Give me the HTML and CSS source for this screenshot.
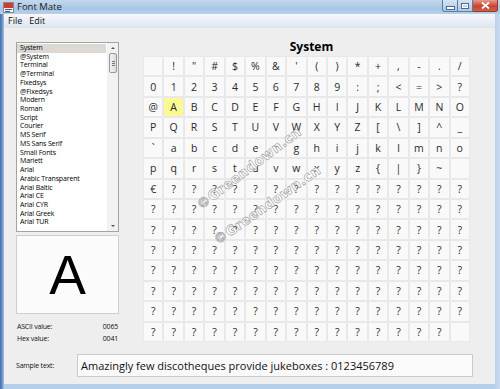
FILE: index.html
```html
<!DOCTYPE html>
<html>
<head>
<meta charset="utf-8">
<link rel="stylesheet" href="styles.css">
</head>
<body>
<div class="window">
  <div class="titlebar">
    <svg class="appicon" width="11" height="11" viewBox="0 0 11 11">
      <rect x="0.5" y="0.5" width="10" height="10" fill="#f4f4f4" stroke="#8a8a8a"/>
      <rect x="1" y="1" width="9" height="5" fill="#d23a2a"/>
      <rect x="2" y="7" width="7" height="1" fill="#3a5a9a"/>
      <rect x="2" y="9" width="5" height="1" fill="#3a5a9a"/>
    </svg>
    <span class="wtitle">Font Mate</span>
    <div class="wbtns">
      <div class="wb wmin"><span class="minbar"></span></div>
      <div class="wb wmax"><span class="maxbox"></span></div>
      <div class="wb wclose">
        <svg width="9" height="7" viewBox="0 0 9 7"><path d="M1 0.5 L8 6.5 M8 0.5 L1 6.5" stroke="#fff" stroke-width="1.8"/></svg>
      </div>
    </div>
  </div>
  <div class="menubar"><span class="mi">File</span><span class="mi">Edit</span></div>
  <div class="client">
    <div class="main">
      <div class="left">
        <div class="list">
          <div class="items">
            <div class="item sel">System</div>
            <div class="item">@System</div>
            <div class="item">Terminal</div>
            <div class="item">@Terminal</div>
            <div class="item">Fixedsys</div>
            <div class="item">@Fixedsys</div>
            <div class="item">Modern</div>
            <div class="item">Roman</div>
            <div class="item">Script</div>
            <div class="item">Courier</div>
            <div class="item">MS Serif</div>
            <div class="item">MS Sans Serif</div>
            <div class="item">Small Fonts</div>
            <div class="item">Marlett</div>
            <div class="item">Arial</div>
            <div class="item">Arabic Transparent</div>
            <div class="item">Arial Baltic</div>
            <div class="item">Arial CE</div>
            <div class="item">Arial CYR</div>
            <div class="item">Arial Greek</div>
            <div class="item">Arial TUR</div>
          </div>
          <div class="sbar">
            <div class="sarrow up"></div>
            <div class="sthumb"><span></span><span></span><span></span></div>
            <div class="strack"></div>
            <div class="sarrow down"></div>
          </div>
        </div>
        <div class="preview">A</div>
        <div class="values">
          <div class="vrow"><span>ASCII value:</span><span>0065</span></div>
          <div class="vrow"><span>Hex value:</span><span>0041</span></div>
        </div>
      </div>
      <div class="right">
        <div class="ftitle">System</div>
        <div class="grid">
          <div class="c"></div><div class="c">!</div><div class="c">&quot;</div><div class="c">#</div><div class="c">$</div><div class="c">%</div><div class="c">&amp;</div><div class="c">'</div><div class="c">(</div><div class="c">)</div><div class="c">*</div><div class="c">+</div><div class="c">,</div><div class="c">-</div><div class="c">.</div><div class="c">/</div>
          <div class="c">0</div><div class="c">1</div><div class="c">2</div><div class="c">3</div><div class="c">4</div><div class="c">5</div><div class="c">6</div><div class="c">7</div><div class="c">8</div><div class="c">9</div><div class="c">:</div><div class="c">;</div><div class="c">&lt;</div><div class="c">=</div><div class="c">&gt;</div><div class="c">?</div>
          <div class="c">@</div><div class="c sel">A</div><div class="c">B</div><div class="c">C</div><div class="c">D</div><div class="c">E</div><div class="c">F</div><div class="c">G</div><div class="c">H</div><div class="c">I</div><div class="c">J</div><div class="c">K</div><div class="c">L</div><div class="c">M</div><div class="c">N</div><div class="c">O</div>
          <div class="c">P</div><div class="c">Q</div><div class="c">R</div><div class="c">S</div><div class="c">T</div><div class="c">U</div><div class="c">V</div><div class="c">W</div><div class="c">X</div><div class="c">Y</div><div class="c">Z</div><div class="c">[</div><div class="c">\</div><div class="c">]</div><div class="c">^</div><div class="c">_</div>
          <div class="c">`</div><div class="c">a</div><div class="c">b</div><div class="c">c</div><div class="c">d</div><div class="c">e</div><div class="c">f</div><div class="c">g</div><div class="c">h</div><div class="c">i</div><div class="c">j</div><div class="c">k</div><div class="c">l</div><div class="c">m</div><div class="c">n</div><div class="c">o</div>
          <div class="c">p</div><div class="c">q</div><div class="c">r</div><div class="c">s</div><div class="c">t</div><div class="c">u</div><div class="c">v</div><div class="c">w</div><div class="c">x</div><div class="c">y</div><div class="c">z</div><div class="c">{</div><div class="c">|</div><div class="c">}</div><div class="c">~</div><div class="c"></div>
          <div class="c">€</div><div class="c">?</div><div class="c">?</div><div class="c">?</div><div class="c">?</div><div class="c">?</div><div class="c">?</div><div class="c">?</div><div class="c">?</div><div class="c">?</div><div class="c">?</div><div class="c">?</div><div class="c">?</div><div class="c">?</div><div class="c">?</div><div class="c">?</div>
          <div class="c">?</div><div class="c">?</div><div class="c">?</div><div class="c">?</div><div class="c">?</div><div class="c">?</div><div class="c">?</div><div class="c">?</div><div class="c">?</div><div class="c">?</div><div class="c">?</div><div class="c">?</div><div class="c">?</div><div class="c">?</div><div class="c">?</div><div class="c">?</div>
          <div class="c">?</div><div class="c">?</div><div class="c">?</div><div class="c">?</div><div class="c">?</div><div class="c">?</div><div class="c">?</div><div class="c">?</div><div class="c">?</div><div class="c">?</div><div class="c">?</div><div class="c">?</div><div class="c">?</div><div class="c">?</div><div class="c">?</div><div class="c">?</div>
          <div class="c">?</div><div class="c">?</div><div class="c">?</div><div class="c">?</div><div class="c">?</div><div class="c">?</div><div class="c">?</div><div class="c">?</div><div class="c">?</div><div class="c">?</div><div class="c">?</div><div class="c">?</div><div class="c">?</div><div class="c">?</div><div class="c">?</div><div class="c">?</div>
          <div class="c">?</div><div class="c">?</div><div class="c">?</div><div class="c">?</div><div class="c">?</div><div class="c">?</div><div class="c">?</div><div class="c">?</div><div class="c">?</div><div class="c">?</div><div class="c">?</div><div class="c">?</div><div class="c">?</div><div class="c">?</div><div class="c">?</div><div class="c">?</div>
          <div class="c">?</div><div class="c">?</div><div class="c">?</div><div class="c">?</div><div class="c">?</div><div class="c">?</div><div class="c">?</div><div class="c">?</div><div class="c">?</div><div class="c">?</div><div class="c">?</div><div class="c">?</div><div class="c">?</div><div class="c">?</div><div class="c">?</div><div class="c">?</div>
          <div class="c">?</div><div class="c">?</div><div class="c">?</div><div class="c">?</div><div class="c">?</div><div class="c">?</div><div class="c">?</div><div class="c">?</div><div class="c">?</div><div class="c">?</div><div class="c">?</div><div class="c">?</div><div class="c">?</div><div class="c">?</div><div class="c">?</div><div class="c">?</div>
          <div class="c">?</div><div class="c">?</div><div class="c">?</div><div class="c">?</div><div class="c">?</div><div class="c">?</div><div class="c">?</div><div class="c">?</div><div class="c">?</div><div class="c">?</div><div class="c">?</div><div class="c">?</div><div class="c">?</div><div class="c">?</div><div class="c">?</div><div class="c"></div>
        </div>
      </div>
    </div>
    <div class="sample">
      <span class="slabel">Sample text:</span>
      <div class="sbox">Amazingly few discotheques provide jukeboxes : 0123456789</div>
    </div>
    <div class="wm wm1">©Greendown.cn</div>
    <div class="wm wm2">©Greendown.cn</div>
  </div>
</div>
</body>
</html>
```
FILE: styles.css
```css
html, body { margin: 0; padding: 0; }
body { width: 500px; height: 389px; overflow: hidden; background: #fff; font-family: "Open Sans", "Noto Sans", sans-serif; }

.window {
  width: 500px; height: 389px; box-sizing: border-box;
  display: flex; flex-direction: column;
  background: linear-gradient(to right, #3f6fa8 0, #7aa3d0 3px, #b5cfeb 4px, #b5cfeb 494px, #c9dbef 500px);
}

.titlebar {
  height: 14px; position: relative; display: flex; align-items: center;
  background: linear-gradient(to bottom, #c4d8ee 0, #a9c6e6 60%, #b7d0ea 100%);
  padding-left: 3px;
}
.appicon { display: block; }
.wtitle { font-size: 9.5px; color: #1a1a1a; margin-left: 3px; line-height: 14px; }
.wbtns { position: absolute; right: 2px; top: 0; display: flex; height: 13px; }
.wb { height: 12px; border: 1px solid #5c7ea6; border-top: 0; display: flex; align-items: center; justify-content: center; box-sizing: border-box; }
.wmin { width: 16px; border-radius: 0 0 0 3px; background: linear-gradient(#d6e4f3, #aec7e3); }
.wmax { width: 15px; border-left: 0; background: linear-gradient(#d6e4f3, #aec7e3); }
.wclose { width: 25px; border-left: 0; border-color: #8e3a30; border-radius: 0 0 3px 0; background: linear-gradient(#e69a8c, #c8442f 55%, #d0624c); }
.minbar { width: 7px; height: 2px; background: #fff; border: 1px solid #4a6a90; margin-top: 4px; }
.maxbox { width: 6px; height: 4px; border: 1px solid #4a6a90; background: transparent; box-shadow: inset 0 0 0 1px #fff; }

.menubar {
  height: 14px; margin: 0 5px 0 4px; display: flex; align-items: center;
  background: linear-gradient(to bottom, #f6f8fb 0, #eaeff6 50%, #dce4ee 100%);
  padding-left: 4px;
}
.mi { font-size: 9px; color: #111; margin-right: 7px; line-height: 14px; }

.client {
  flex: 1; margin: 0 5px 5px 4px; position: relative;
  background: #eeeeee;
  padding: 12px 0 0 12px;
  display: flex; flex-direction: column;
}
.main { display: flex; gap: 25px; }
.left { width: 103px; padding-top: 2px; }
.list {
  height: 190px; box-sizing: border-box; border: 1px solid #a3a3a3;
  background: #fff; display: flex;
}
.items { flex: 1; padding-top: 1px; }
.item { font-size: 7px; line-height: 8.72px; height: 8.72px; padding-left: 3px; color: #000; white-space: nowrap; letter-spacing: -0.15px; }
.item.sel { background: #dcd8d3; margin-right: 1px; }
.sbar { width: 10px; border-left: 1px solid #f0f0f0; background: #f2f2f2; display: flex; flex-direction: column; align-items: center; }
.sarrow { width: 0; height: 0; border-left: 2px solid transparent; border-right: 2px solid transparent; margin: 4px 0; }
.sarrow.up { border-bottom: 2px solid #555; }
.sarrow.down { border-top: 2px solid #555; }
.sthumb {
  width: 8px; height: 20px; box-sizing: border-box; border: 1px solid #9a9a9a; border-radius: 2px;
  background: linear-gradient(to right, #f2f2f2, #dcdcdc);
  display: flex; flex-direction: column; align-items: center; justify-content: center; gap: 1px;
}
.sthumb span { width: 3px; height: 1px; background: #777; }
.strack { flex: 1; }

.preview {
  margin-top: 3px; height: 79px; box-sizing: border-box; border: 1px solid #cfcfcf;
  background: #fbfbfb; display: flex; align-items: center; justify-content: center;
  font-family: "Liberation Sans", Arial, sans-serif; font-size: 55px; color: #000; line-height: 1;
  padding-top: 2px;
}
.values { margin-top: 7px; }
.vrow { display: flex; justify-content: space-between; font-size: 7px; line-height: 12px; height: 12px; color: #111; padding: 0 1px 0 1px; letter-spacing: -0.2px; }

.right { width: 325px; }
.ftitle { height: 17px; font-size: 12px; font-weight: bold; text-align: center; line-height: 13px; padding-left: 10px; color: #000; font-family: "Open Sans", sans-serif; }
.grid {
  display: grid; grid-template-columns: repeat(16, 1fr); grid-template-rows: repeat(14, 1fr);
  gap: 2px; height: 284px;
}
.c {
  background: #f9f9f9; box-shadow: 0 0 0 0.5px #e2e2e2;
  display: flex; align-items: center; justify-content: center;
  font-size: 10.5px; color: #2a2a2a; font-family: "Open Sans", sans-serif;
}
.c.sel { background: #fbf895; }

.sample { display: flex; align-items: center; margin-top: 9px; }
.slabel { width: 61px; font-size: 7px; color: #111; letter-spacing: -0.2px; }
.sbox {
  width: 396px; height: 23px; box-sizing: border-box; border: 1px solid #cacaca; background: #fafafa;
  font-size: 11px; line-height: 21px; padding-left: 3px; color: #111; white-space: nowrap; overflow: hidden;
}

.wm {
  position: absolute; font-family: "DejaVu Sans", sans-serif; font-weight: bold; font-size: 13.5px;
  color: #ffffff; -webkit-text-stroke: 0.6px #9a9a9a; transform-origin: left center;
  white-space: nowrap; letter-spacing: 0.3px;
}
.wm1 { left: 194px; top: 170px; transform: rotate(-37deg); }
.wm2 { left: 211px; top: 205px; transform: rotate(-35deg); }
```
